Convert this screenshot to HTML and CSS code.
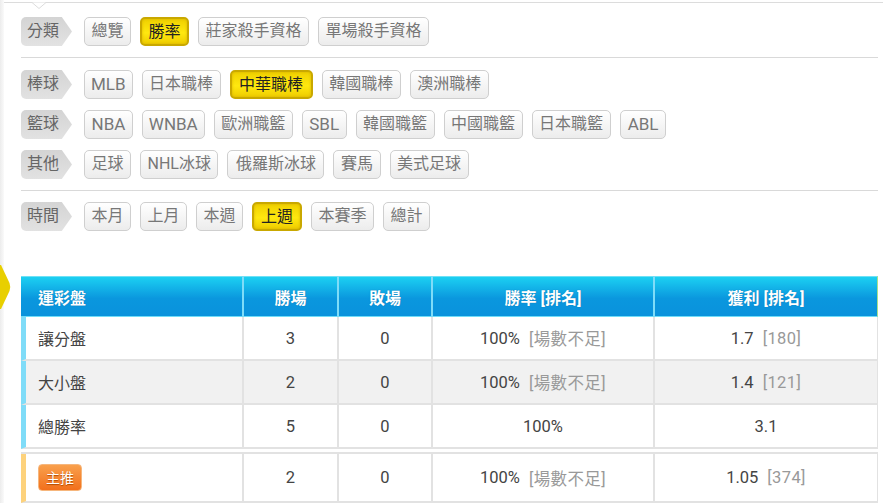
FILE: index.html
```html
<!DOCTYPE html>
<html lang="zh-Hant">
<head>
<meta charset="utf-8">
<title>勝率</title>
<link rel="stylesheet" href="styles.css">
</head>
<body>
<div class="page">
  <div class="edge"></div>
  <svg class="notch" width="20" height="8" viewBox="0 0 20 8"><path d="M0 .5H3L10 6.5L17 .5H20" fill="#fff" stroke="#dcdcdc"/></svg>
  <svg class="marker" width="11" height="44" viewBox="0 0 11 44"><path d="M0 0H1L9.500 18Q11 22 9.500 26L1 44H0Z" fill="#e8cf00"/></svg>
  <section class="filters">
    <div class="group">
      <div class="row">
        <span class="tag">分類</span>
        <a class="btn">總覽</a><a class="btn on">勝率</a><a class="btn">莊家殺手資格</a><a class="btn">單場殺手資格</a>
      </div>
    </div>
    <div class="group">
      <div class="row">
        <span class="tag">棒球</span>
        <a class="btn lat">MLB</a><a class="btn">日本職棒</a><a class="btn on long">中華職棒</a><a class="btn">韓國職棒</a><a class="btn">澳洲職棒</a>
      </div>
      <div class="row">
        <span class="tag">籃球</span>
        <a class="btn lat m">NBA</a><a class="btn lat">WNBA</a><a class="btn">歐洲職籃</a><a class="btn lat m">SBL</a><a class="btn">韓國職籃</a><a class="btn">中國職籃</a><a class="btn">日本職籃</a><a class="btn lat w">ABL</a>
      </div>
      <div class="row">
        <span class="tag">其他</span>
        <a class="btn">足球</a><a class="btn">NHL冰球</a><a class="btn five">俄羅斯冰球</a><a class="btn">賽馬</a><a class="btn">美式足球</a>
      </div>
    </div>
    <div class="group last">
      <div class="row">
        <span class="tag">時間</span>
        <a class="btn">本月</a><a class="btn">上月</a><a class="btn">本週</a><a class="btn on mid">上週</a><a class="btn">本賽季</a><a class="btn">總計</a>
      </div>
    </div>
  </section>
  <div class="stats">
    <div class="line head">
      <div class="c first">運彩盤</div><div class="c">勝場</div><div class="c">敗場</div><div class="c">勝率 [排名]</div><div class="c">獲利 [排名]</div>
    </div>
    <div class="line body">
      <div class="c first">讓分盤</div><div class="c">3</div><div class="c">0</div><div class="c">100%<i>[場數不足]</i></div><div class="c">1.7<i>[180]</i></div>
    </div>
    <div class="line body alt">
      <div class="c first">大小盤</div><div class="c">2</div><div class="c">0</div><div class="c">100%<i>[場數不足]</i></div><div class="c">1.4<i>[121]</i></div>
    </div>
    <div class="line body">
      <div class="c first">總勝率</div><div class="c">5</div><div class="c">0</div><div class="c">100%</div><div class="c">3.1</div>
    </div>
    <div class="line body pick">
      <div class="c first"><span class="badge">主推</span></div><div class="c">2</div><div class="c">0</div><div class="c">100%<i>[場數不足]</i></div><div class="c">1.05<i>[374]</i></div>
    </div>
  </div>
</div>
</body>
</html>
```
FILE: styles.css
```css
* { box-sizing: border-box; }
html, body { margin: 0; padding: 0; background: #fff; }
body {
  font-family: "Roboto", "Noto Sans CJK TC", sans-serif;
  color: #444;
  height: 503px;
  overflow: hidden;
}
.page {
  position: relative;
  width: 883px;
  height: 501px;
  margin-top: 2px;
  padding: 0 5px 0 21px;
  border-top: 1px solid #dcdcdc;
}
.edge {
  position: absolute;
  left: 0;
  top: -3px;
  bottom: 0;
  width: 4px;
  background: linear-gradient(to right, #ececec, #fafafa);
}
.notch { position: absolute; left: 29px; top: -1px; }
.marker { position: absolute; left: 0; top: 262px; }
.filters { width: 857px; }
.group {
  padding: 14px 0 11px;
  border-bottom: 1px solid #d9d9d9;
}
.group + .group { padding-top: 12px; }
.group.last { padding-top: 11px; border-bottom: 0; }
.row {
  display: flex;
  align-items: center;
  gap: 9px;
  height: 29px;
}
.row + .row { margin-top: 11px; }
.tag {
  width: 51px;
  height: 29px;
  margin-right: 3px;
  padding-left: 6px;
  font-size: 16px;
  line-height: 27px;
  color: #666;
  background: linear-gradient(#d4d4d4, #e2e2e2);
  border-radius: 5px 0 0 5px;
  clip-path: polygon(0 0, 80% 0, 100% 50%, 80% 100%, 0 100%);
}
.btn {
  height: 29px;
  padding: 0 6.5px;
  font-size: 16px;
  line-height: 26px;
  color: #777;
  white-space: nowrap;
  background: linear-gradient(#fff, #ececec);
  border: 1px solid #cfcfcf;
  border-radius: 5px;
}
.btn.lat { padding: 0 6px; font-size: 17px; }
.btn.lat.m { padding: 0 6.5px; }
.btn.lat.w { padding: 0 7px; }
.btn.five { padding: 0 7.5px; }
.btn.on {
  line-height: 25px;
  color: #222;
  background: linear-gradient(#f0d000, #ffe80f 55%, #efcd00);
  border: 2px solid #c9a800;
  box-shadow: inset 0 0 3px #d8b400;
}
.btn.on.mid { padding: 0 7px; }
.btn.on.long { padding: 0 7.5px; }
.stats { width: 857px; margin-top: 34px; }
.line {
  display: grid;
  grid-template-columns: 223px 95px 94px 222px 223px;
}
.c {
  display: flex;
  align-items: center;
  justify-content: center;
  font-size: 16.5px;
  border-right: 2px solid #e2e2e2;
  border-bottom: 2px solid #e2e2e2;
}
.c:last-child { border-right-width: 1px; }
.c.first {
  justify-content: flex-start;
  padding-left: 12px;
  font-size: 16px;
  border-left: 5px solid #7fdcf8;
}
.c i {
  margin-left: 9px;
  font-style: normal;
  letter-spacing: .4px;
  color: #999;
}
.head { height: 41px; }
.head .c {
  font-size: 16px;
  font-weight: 700;
  color: #fff;
  background: linear-gradient(#1cd0f2, #0a97de 55%, #0a92dc);
  border: 0;
  border-top: 1px solid #6fe0f5;
  border-right: 2px solid #7fdcf8;
  border-bottom: 1px solid #6fdcf8;
  text-shadow: 0 0 1px #0a6fa8;
}
.head .c:last-child { border-right: 1px solid #a8e08a; }
.head .c.first { padding-left: 17px; }
.body { height: 44px; }
.alt .c { background: #f1f1f1; }
.pick { height: 51px; margin-top: 3px; border-top: 2px solid #e2e2e2; }
.pick .c.first { border-left-color: #fdd27c; }
.badge {
  width: 44px;
  height: 27px;
  font-size: 14px;
  line-height: 26px;
  text-align: center;
  color: #fff;
  background: linear-gradient(#f9a04c, #f2701c);
  border: 1px solid #f6b67c;
  border-radius: 4px;
  text-shadow: 0 1px 1px #b04a00;
}
```
